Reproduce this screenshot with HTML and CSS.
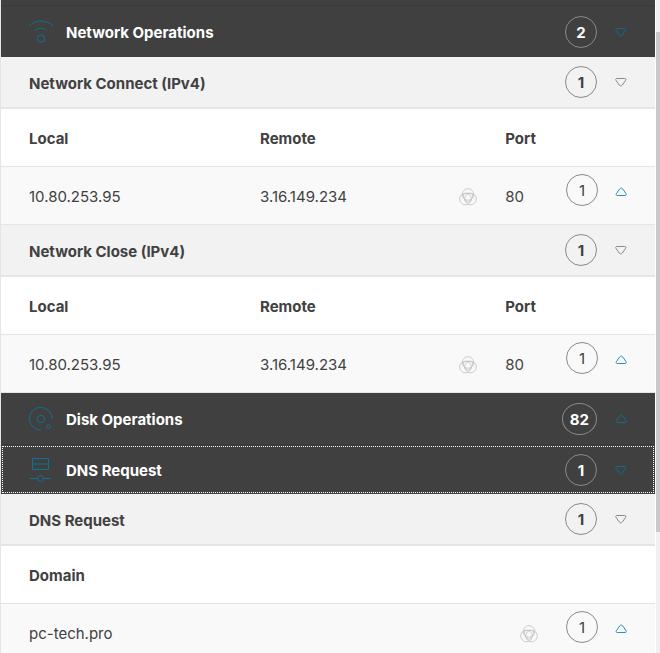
FILE: index.html
```html
<!DOCTYPE html>
<html lang="en">
<head>
<meta charset="utf-8">
<title>Operations</title>
<link rel="stylesheet" href="styles.css">
</head>
<body>
<svg class="sprite" aria-hidden="true">
  <symbol id="caret" viewBox="0 0 12 10">
    <path d="M1.800 1.500h8c1 0 1.400.8.900 1.700L7.400 8c-.8 1.200-2.400 1.200-3.200 0L.9 3.200C.4 2.300.8 1.500 1.800 1.500z"/>
  </symbol>
  <symbol id="intel" viewBox="0 0 18 18">
    <circle cx="9" cy="6.500" r="5.800"/><circle cx="6.500" cy="11" r="5.800"/><circle cx="11.500" cy="11" r="5.800"/>
    <path d="M4.500 6q4.500-2 9 0 .8 5.500-4.500 8.500-5.300-3-4.500-8.500z"/>
  </symbol>
</svg>
<div class="app">
  <main class="panel">
    <div class="strip"></div>

    <section>
      <button class="group" type="button" aria-expanded="true">
        <svg class="group-icon" viewBox="0 0 24 24"><path d="M0 6C6-.6 18-.6 24 6M6 10.500c3.500-3 8.500-3 12 0"/><circle cx="12" cy="18.500" r="3.700"/></svg>
        <span class="label">Network Operations</span>
        <span class="count">2</span>
        <svg class="caret"><use href="#caret"/></svg>
      </button>
      <button class="subgroup" type="button" aria-expanded="true">
        <span class="label">Network Connect (IPv4)</span>
        <span class="count">1</span>
        <svg class="caret"><use href="#caret"/></svg>
      </button>
      <table>
        <thead><tr><th class="col-local">Local</th><th class="col-remote">Remote</th><th>Port</th><th class="col-actions"></th></tr></thead>
        <tbody><tr>
          <td>10.80.253.95</td>
          <td><div class="value">3.16.149.234<svg class="intel"><use href="#intel"/></svg></div></td>
          <td>80</td>
          <td class="actions"><button class="toggle" type="button" aria-label="Show details"><span class="count">1</span><svg class="caret up"><use href="#caret"/></svg></button></td>
        </tr></tbody>
      </table>
      <button class="subgroup" type="button" aria-expanded="true">
        <span class="label">Network Close (IPv4)</span>
        <span class="count">1</span>
        <svg class="caret"><use href="#caret"/></svg>
      </button>
      <table>
        <thead><tr><th class="col-local">Local</th><th class="col-remote">Remote</th><th>Port</th><th class="col-actions"></th></tr></thead>
        <tbody><tr>
          <td>10.80.253.95</td>
          <td><div class="value">3.16.149.234<svg class="intel"><use href="#intel"/></svg></div></td>
          <td>80</td>
          <td class="actions"><button class="toggle" type="button" aria-label="Show details"><span class="count">1</span><svg class="caret up"><use href="#caret"/></svg></button></td>
        </tr></tbody>
      </table>
    </section>

    <section>
      <button class="group collapsed" type="button" aria-expanded="false">
        <svg class="group-icon" viewBox="0 0 24 24"><path d="M12 23A11.300 11.300 0 1 1 23 12"/><circle cx="12" cy="12" r="3.700"/><circle cx="19.500" cy="19.500" r="1.800"/></svg>
        <span class="label">Disk Operations</span>
        <span class="count">82</span>
        <svg class="caret up"><use href="#caret"/></svg>
      </button>
    </section>

    <section>
      <button class="group selected" type="button" aria-expanded="true">
        <svg class="group-icon" viewBox="0 0 24 24"><path d="M3.500.5h16v11h-16zM3.500 6h16M1 20.500h7.500M14.500 20.500H22"/><circle cx="11.500" cy="20.500" r="3"/></svg>
        <span class="label">DNS Request</span>
        <span class="count">1</span>
        <svg class="caret"><use href="#caret"/></svg>
      </button>
      <button class="subgroup" type="button" aria-expanded="true">
        <span class="label">DNS Request</span>
        <span class="count">1</span>
        <svg class="caret"><use href="#caret"/></svg>
      </button>
      <table>
        <thead><tr><th>Domain</th><th class="col-actions"></th></tr></thead>
        <tbody><tr>
          <td><div class="value">pc-tech.pro<svg class="intel"><use href="#intel"/></svg></div></td>
          <td class="actions"><button class="toggle" type="button" aria-label="Show details"><span class="count">1</span><svg class="caret up"><use href="#caret"/></svg></button></td>
        </tr></tbody>
      </table>
    </section>
  </main>
  <div class="scrollbar" aria-hidden="true"><div class="thumb"></div></div>
</div>
</body>
</html>
```
FILE: styles.css
```css
* { box-sizing: border-box; }

body {
  margin: 0;
  background: #fff;
  color: #414141;
  font: 15px/20px Inter, "Liberation Sans", sans-serif;
}

.sprite { display: none; }

.app {
  display: flex;
  gap: 1px;
  height: 100vh;
  overflow: hidden;
}

.panel {
  flex: 1;
  min-width: 0;
  border-left: 1px solid #e5e5e5;
}

.strip {
  height: 6px;
  background: #404040;
  border-bottom: 1px solid #393939;
}

button {
  border: 0;
  font: inherit;
  color: inherit;
  cursor: pointer;
}

.group, .subgroup {
  display: flex;
  align-items: center;
  width: 100%;
  padding: 0 28px;
  font-weight: 700;
  text-align: left;
}

.label {
  flex: 1;
  padding-top: 2px;
}

.group {
  height: 51px;
  background: #404040;
  color: #fff;
}

.group.collapsed {
  height: 52px;
  border-bottom: 1px solid #393939;
}

.group.selected {
  height: 49px;
  outline: 1px dotted #fff;
  outline-offset: -2px;
}

.group-icon {
  width: 24px;
  height: 24px;
  margin-right: 13px;
  fill: none;
  stroke: #0d7390;
  overflow: visible;
}

.subgroup {
  height: 52px;
  background: #f2f2f2;
  border-bottom: 2px solid #e5e5e5;
}

.subgroup .label { padding-top: 3px; }

.count {
  display: flex;
  align-items: center;
  justify-content: center;
  min-width: 32px;
  height: 32px;
  padding: 2px 7px 0;
  border: 1px solid #8a8a8a;
  border-radius: 50%;
}

.caret {
  width: 12px;
  height: 10px;
  margin-left: 18px;
  fill: none;
  stroke: #8a8a8a;
}

.group .caret { stroke: #0d6f8b; }
.caret.up { transform: rotate(180deg); }

table {
  width: 100%;
  table-layout: fixed;
  border-collapse: separate;
  border-spacing: 0;
}

th, td {
  height: 58px;
  padding: 2px 0 0;
  border-bottom: 1px solid #e5e5e5;
  text-align: left;
  vertical-align: middle;
}

th { font-weight: 700; }
td { background: #f9f9f9; }
th:first-child, td:first-child { padding-left: 28px; }

.col-local { width: 39.6%; }
.col-remote { width: 37.5%; }
.col-actions { width: 89px; }

.value {
  display: flex;
  align-items: center;
  justify-content: space-between;
  padding-right: 28px;
}

.intel {
  width: 18px;
  height: 18px;
  fill: none;
  stroke: #c0c0c0;
  stroke-width: .8;
}

td.actions { padding: 0 0 12px; }

.toggle {
  display: flex;
  align-items: center;
  padding: 0;
  background: none;
}

.toggle .caret {
  margin-top: 4px;
  margin-left: 17px;
  stroke: #2a93b3;
}

.scrollbar {
  width: 4px;
  padding-top: 32px;
  background: #f0f0f0;
}

.thumb {
  height: 80.5%;
  background: #c9c9c9;
}
```
